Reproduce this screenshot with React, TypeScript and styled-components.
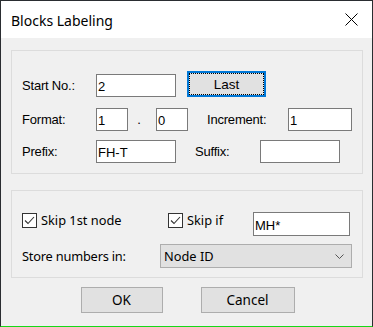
import React from "react";
import styled, { createGlobalStyle } from "styled-components";

const Global = createGlobalStyle`
  html, body { margin: 0; padding: 0; background: #ffffff; }
  * { box-sizing: border-box; }
`;

const Win = styled.div`
  width: 373px;
  height: 327px;
  border: 1px solid #2a2d31;
  border-bottom: 1px solid #16d816;
  background: #f0f0f0;
  display: flex;
  flex-direction: column;
  font-family: "Liberation Sans", Arial, sans-serif;
  color: #000;
`;

const TitleBar = styled.div`
  height: 37px;
  background: #ffffff;
  display: flex;
  align-items: center;
  justify-content: space-between;
  padding: 0 14px 0 10px;
  flex-shrink: 0;
`;

const Title = styled.span`
  font-family: "Noto Sans", sans-serif;
  font-size: 14px;
  color: #000;
  margin-top: 1px;
`;

const Body = styled.div`
  display: flex;
  flex-direction: column;
  padding: 12px 9px 0 10px;
`;

const Group = styled.div<{ $pt: number; $pb: number }>`
  border: 1px solid #dcdcdc;
  padding: ${(p) => p.$pt}px 0 ${(p) => p.$pb}px 10px;
  display: flex;
  flex-direction: column;
`;

const Row = styled.div<{ $mt?: number; $align?: string }>`
  display: flex;
  align-items: ${(p) => p.$align ?? "center"};
  margin-top: ${(p) => p.$mt ?? 0}px;
`;

const Label = styled.span<{ $w: number; $ml?: number; $size?: number; $font?: string }>`
  width: ${(p) => p.$w}px;
  margin-left: ${(p) => p.$ml ?? 0}px;
  flex-shrink: 0;
  font-size: ${(p) => p.$size ?? 13}px;
  font-family: ${(p) => p.$font ?? '"Liberation Sans", Arial, sans-serif'};
  letter-spacing: -0.2px;
  white-space: nowrap;
`;

const Field = styled.div<{ $w: number; $h?: number; $mt?: number; $ml?: number }>`
  width: ${(p) => p.$w}px;
  height: ${(p) => p.$h ?? 23}px;
  margin-top: ${(p) => p.$mt ?? 0}px;
  margin-left: ${(p) => p.$ml ?? 0}px;
  flex-shrink: 0;
  background: #ffffff;
  border: 1px solid #7a7a7a;
  font-size: 13px;
  padding: 2px 0 0 1px;
  display: flex;
  align-items: center;
  line-height: 1;
`;

const Dot = styled.span`
  width: 28px;
  flex-shrink: 0;
  text-align: center;
  font-size: 13px;
  padding-right: 6px;
`;

const FocusButton = styled.div`
  position: relative;
  width: 79px;
  height: 26px;
  margin-left: 11px;
  background: #e1e1e1;
  border: 2px solid #0078d7;
  display: flex;
  align-items: center;
  justify-content: center;
  font-size: 13.5px;
  &::after {
    content: "";
    position: absolute;
    inset: 0;
    border: 1px dotted #000;
  }
`;

const CheckItem = styled.div<{ $w: number }>`
  width: ${(p) => p.$w}px;
  flex-shrink: 0;
  display: flex;
  align-items: center;
  gap: 4px;
  font-family: "Noto Sans", sans-serif;
  font-size: 12.8px;
`;

const Box = styled.span`
  width: 15px;
  height: 15px;
  border: 1px solid #333;
  background: #fff;
  display: flex;
  align-items: center;
  justify-content: center;
  flex-shrink: 0;
`;

const Select = styled.div`
  width: 192px;
  height: 24px;
  flex-shrink: 0;
  background: #e1e1e1;
  border: 1px solid #adadad;
  display: flex;
  align-items: center;
  justify-content: space-between;
  padding: 0 7px 0 3px;
  font-family: "Noto Sans", sans-serif;
  font-size: 12.8px;
`;

const Buttons = styled.div`
  display: flex;
  justify-content: center;
  gap: 38px;
  margin-top: 9px;
  padding-left: 1px;
`;

const Btn = styled.div<{ $w: number }>`
  width: ${(p) => p.$w}px;
  height: 26px;
  background: #e1e1e1;
  border: 1px solid #adadad;
  display: flex;
  align-items: center;
  justify-content: center;
  font-family: "Noto Sans", sans-serif;
  font-size: 13.5px;
`;

const Check = () => (
  <svg width="13" height="13" viewBox="0 0 13 13">
    <path d="M2 6.5 L5 9.5 L11 3" fill="none" stroke="#333" strokeWidth="1.1" />
  </svg>
);

export default function App() {
  return (
    <>
      <Global />
      <Win>
        <TitleBar>
          <Title>Blocks Labeling</Title>
          <svg width="13" height="13" viewBox="0 0 13 13">
            <path d="M0.5 0.5 L12.5 12.5 M12.5 0.5 L0.5 12.5" stroke="#000" strokeWidth="1" />
          </svg>
        </TitleBar>
        <Body>
          <Group $pt={20} $pb={10}>
            <Row $align="flex-end">
              <Label $w={74} style={{ marginBottom: 4 }}>Start No.:</Label>
              <Field $w={80}>2</Field>
              <FocusButton>Last</FocusButton>
            </Row>
            <Row $mt={11}>
              <Label $w={74}>Format:</Label>
              <Field $w={32}>1</Field>
              <Dot>.</Dot>
              <Field $w={32}>0</Field>
              <Label $w={81} $ml={19}>Increment:</Label>
              <Field $w={64}>1</Field>
            </Row>
            <Row $mt={9}>
              <Label $w={74}>Prefix:</Label>
              <Field $w={80}>FH-T</Field>
              <Label $w={65} $ml={19}>Suffix:</Label>
              <Field $w={80}></Field>
            </Row>
          </Group>
          <Group $pt={20} $pb={9} style={{ marginTop: 16 }}>
            <Row $align="flex-start">
              <CheckItem $w={146}>
                <Box><Check /></Box>
                <span>Skip 1st node</span>
              </CheckItem>
              <CheckItem $w={85}>
                <Box><Check /></Box>
                <span>Skip if</span>
              </CheckItem>
              <Field $w={97} $h={24} $mt={1}>MH*</Field>
            </Row>
            <Row $mt={8}>
              <Label $w={138} $size={12.8} $font='"Noto Sans", sans-serif'>Store numbers in:</Label>
              <Select>
                <span>Node ID</span>
                <svg width="9" height="5" viewBox="0 0 9 5">
                  <path d="M0.5 0.5 L4.5 4.5 L8.5 0.5" fill="none" stroke="#555" strokeWidth="1" />
                </svg>
              </Select>
            </Row>
          </Group>
          <Buttons>
            <Btn $w={82}>OK</Btn>
            <Btn $w={94}>Cancel</Btn>
          </Buttons>
        </Body>
      </Win>
    </>
  );
}
